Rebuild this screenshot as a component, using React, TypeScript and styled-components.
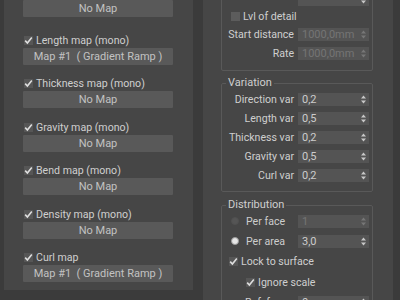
import styled, { createGlobalStyle } from "styled-components";

const GlobalStyle = createGlobalStyle`
  body {
    margin: 0;
    background: #3b3b3b;
    font-family: Roboto, "Segoe UI", sans-serif;
    font-size: 10.6px;
    color: #cdcdcd;
  }
`;

const Page = styled.div`
  display: flex;
  align-items: flex-start;
  gap: 10px;
  width: 400px;
  height: 300px;
  overflow: hidden;
  padding-left: 4px;
  box-sizing: border-box;
`;

const LeftRollout = styled.div`
  width: 189px;
  height: 293px;
  margin-top: -3px;
  background: #464646;
  box-sizing: border-box;
  padding: 0 0 0 19px;
  display: flex;
  flex-direction: column;
`;

const RightRollout = styled.div`
  width: 190px;
  height: 330px;
  margin-top: -12px;
  background: #464646;
  box-sizing: border-box;
  padding: 0 0 0 18px;
  display: flex;
  flex-direction: column;
  gap: 6px;
`;

const MapBlock = styled.div<{ $gap?: number }>`
  display: flex;
  flex-direction: column;
  margin-top: ${(p) => p.$gap ?? 0}px;
`;

const MapButton = styled.div`
  width: 150px;
  height: 17px;
  background: #595959;
  color: #c2c2c2;
  display: flex;
  align-items: center;
  justify-content: center;
  border-radius: 1px;
  white-space: pre;
  font-size: 11px;
`;

const CheckRow = styled.label<{ $indent?: number; $h?: number }>`
  display: flex;
  align-items: center;
  gap: 3px;
  height: ${(p) => p.$h ?? 16}px;
  padding-left: ${(p) => p.$indent ?? 1}px;
  color: #cfcfcf;
`;

const Box = styled.span<{ $checked?: boolean }>`
  width: 9px;
  height: 9px;
  background: ${(p) => (p.$checked ? "#565656" : "#5c5c5c")};
  display: inline-flex;
  align-items: center;
  justify-content: center;
`;

const Group = styled.fieldset<{ $pt: number; $pb: number; $mt?: number }>`
  width: 151px;
  box-sizing: border-box;
  margin: ${(p) => p.$mt ?? 0}px 0 0 0;
  border: 1px solid #595959;
  border-radius: 2px;
  padding: ${(p) => p.$pt}px 3px ${(p) => p.$pb}px 6px;
  display: flex;
  flex-direction: column;
`;

const Legend = styled.legend`
  padding: 0 2px;
  margin-left: -2px;
  color: #cfcfcf;
  line-height: 12px;
  font-size: 11px;
`;

const FieldRow = styled.div<{ $h: number }>`
  display: grid;
  grid-template-columns: 66px 71px;
  column-gap: 4px;
  align-items: center;
  height: ${(p) => p.$h}px;
`;

const Label = styled.span`
  text-align: right;
  color: #cfcfcf;
  white-space: nowrap;
`;

const RadioLabel = styled.span`
  display: flex;
  align-items: center;
  gap: 7px;
  padding-left: 3px;
  white-space: nowrap;
`;

const Radio = styled.span<{ $on?: boolean }>`
  width: 8px;
  height: 8px;
  border-radius: 50%;
  background: ${(p) => (p.$on ? "#e6e6e6" : "#555555")};
  border: 1px solid ${(p) => (p.$on ? "#9a9a9a" : "#505050")};
  box-sizing: border-box;
`;

const Spinner = styled.div<{ $disabled?: boolean }>`
  height: 13px;
  background: #545454;
  display: flex;
  align-items: center;
  justify-content: space-between;
  padding: 0 3px 0 4px;
  color: ${(p) => (p.$disabled ? "#747474" : "#cccccc")};
  font-size: 11px;
`;

const Check = () => (
  <svg width="9" height="9" viewBox="0 0 9 9">
    <path d="M1.2 4.6 L3.4 7 L7.8 1.6" fill="none" stroke="#dedede" strokeWidth="1.6" />
  </svg>
);

const Arrows = ({ dim }: { dim?: boolean }) => (
  <svg width="5" height="9" viewBox="0 0 5 9">
    <path d="M2.5 0.5 L5 3.5 L0 3.5 Z M0 5.5 L5 5.5 L2.5 8.5 Z" fill={dim ? "#777" : "#c8c8c8"} />
  </svg>
);

const CheckBox = ({ checked }: { checked?: boolean }) => (
  <Box $checked={checked}>{checked && <Check />}</Box>
);

const SpinField = ({ value, disabled }: { value: string; disabled?: boolean }) => (
  <Spinner $disabled={disabled}>
    <span>{value}</span>
    <Arrows dim={disabled} />
  </Spinner>
);

const maps = [
  { label: "Length map (mono)", map: "Map #1  ( Gradient Ramp )", gap: 15 },
  { label: "Thickness map (mono)", map: "No Map", gap: 10 },
  { label: "Gravity map (mono)", map: "No Map", gap: 11 },
  { label: "Bend map (mono)", map: "No Map", gap: 10 },
  { label: "Density map (mono)", map: "No Map", gap: 11 },
  { label: "Curl map", map: "Map #1  ( Gradient Ramp )", gap: 10 },
];

const variation = [
  ["Direction var", "0,2"],
  ["Length var", "0,5"],
  ["Thickness var", "0,2"],
  ["Gravity var", "0,5"],
  ["Curl var", "0,2"],
];

export default function App() {
  return (
    <>
      <GlobalStyle />
      <Page>
        <LeftRollout>
          <MapBlock $gap={3}>
            <MapButton>No Map</MapButton>
          </MapBlock>
          {maps.map((m) => (
            <MapBlock key={m.label} $gap={m.gap}>
              <CheckRow>
                <CheckBox checked />
                {m.label}
              </CheckRow>
              <MapButton>{m.map}</MapButton>
            </MapBlock>
          ))}
        </LeftRollout>

        <RightRollout>
          <Group $pt={2} $pb={6}>
            <FieldRow $h={17}>
              <span />
              <SpinField value="" />
            </FieldRow>
            <CheckRow $indent={3} $h={17}>
              <CheckBox />
              Lvl of detail
            </CheckRow>
            <FieldRow $h={18}>
              <Label>Start distance</Label>
              <SpinField value="1000,0mm" disabled />
            </FieldRow>
            <FieldRow $h={21}>
              <Label>Rate</Label>
              <SpinField value="1000,0mm" disabled />
            </FieldRow>
          </Group>

          <Group $pt={1} $pb={6}>
            <Legend>Variation</Legend>
            {variation.map(([l, v]) => (
              <FieldRow key={l} $h={19}>
                <Label>{l}</Label>
                <SpinField value={v} />
              </FieldRow>
            ))}
          </Group>

          <Group $pt={0} $pb={5} $mt={1}>
            <Legend>Distribution</Legend>
            <FieldRow $h={20}>
              <RadioLabel>
                <Radio />
                Per face
              </RadioLabel>
              <SpinField value="1" disabled />
            </FieldRow>
            <FieldRow $h={20}>
              <RadioLabel>
                <Radio $on />
                Per area
              </RadioLabel>
              <SpinField value="3,0" />
            </FieldRow>
            <CheckRow $indent={1} $h={20}>
              <CheckBox checked />
              Lock to surface
            </CheckRow>
            <CheckRow $indent={18} $h={22}>
              <CheckBox checked />
              Ignore scale
            </CheckRow>
            <FieldRow $h={18}>
              <Label>Ref. frame</Label>
              <SpinField value="0" />
            </FieldRow>
          </Group>
        </RightRollout>
      </Page>
    </>
  );
}
